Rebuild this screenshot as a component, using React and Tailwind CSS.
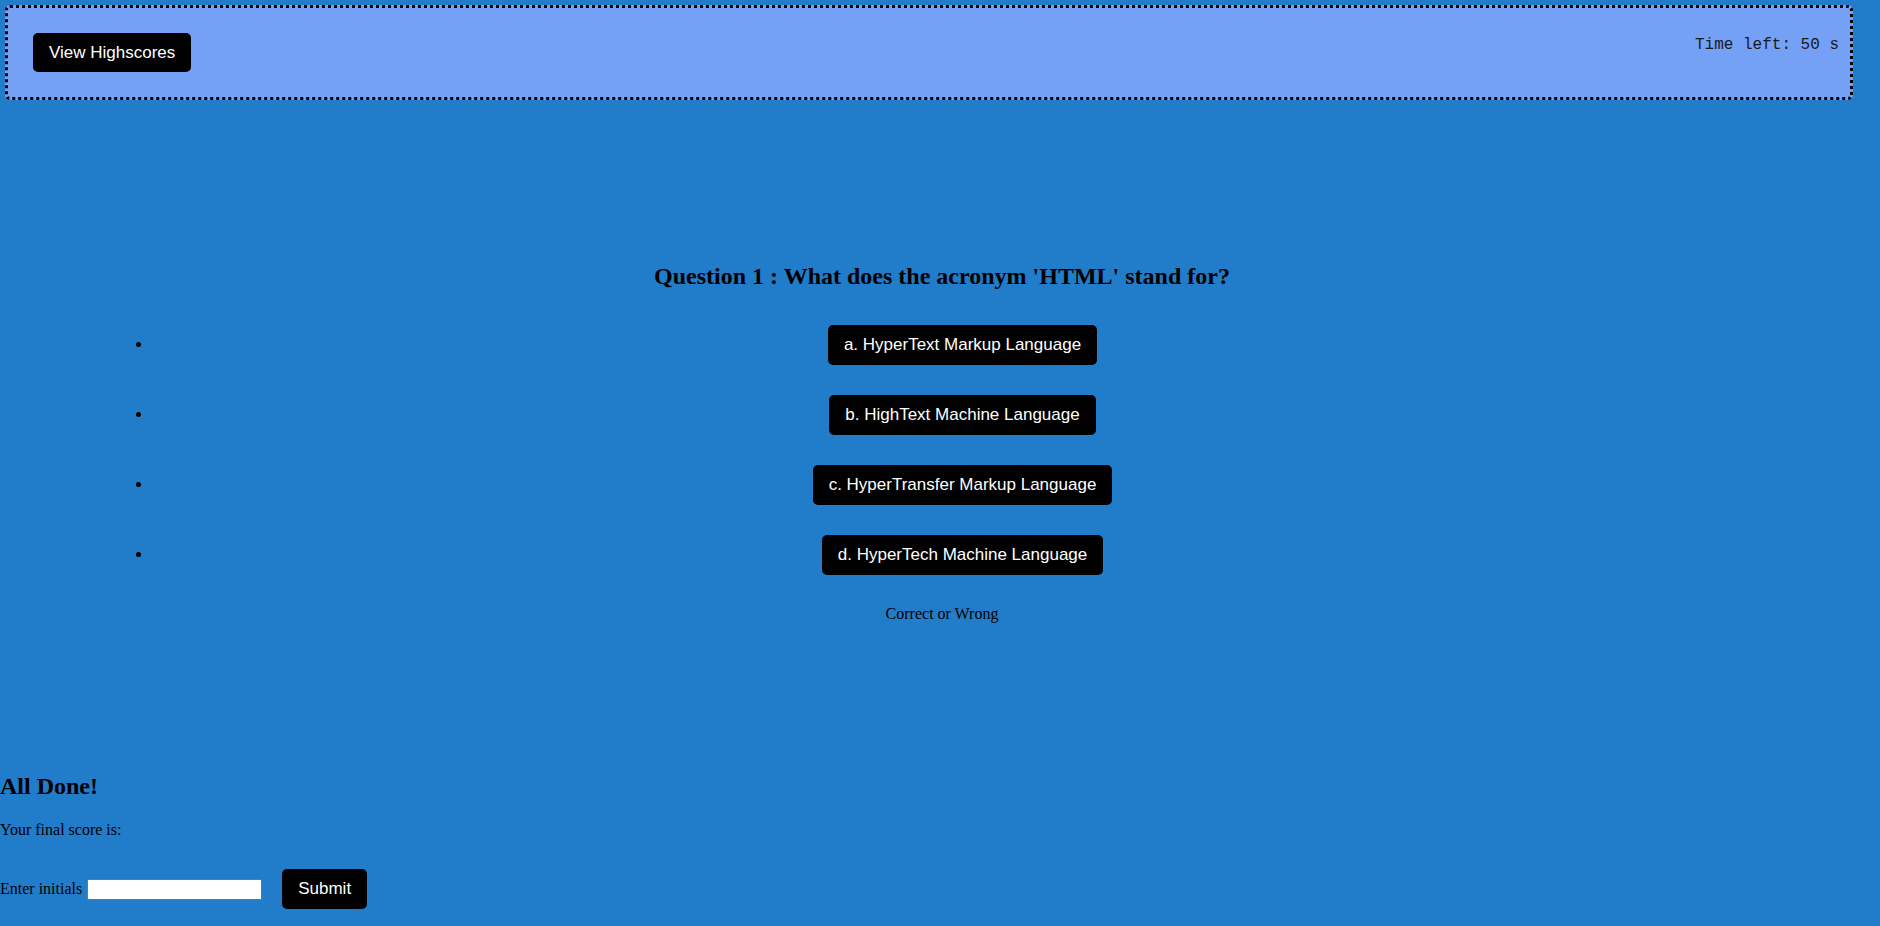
export default function App() {
  const answers = [
    "a. HyperText Markup Language",
    "b. HighText Machine Language",
    "c. HyperTransfer Markup Language",
    "d. HyperTech Machine Language",
  ];
  return (
    <div className="min-h-screen w-full bg-[#217cca] pt-[5px] text-black" style={{ fontFamily: '"Liberation Serif", serif' }}>
      <header className="ml-[5px] flex h-[95px] w-[1848px] items-start justify-between rounded-[5px] border-[3px] border-dotted border-black bg-[#74a0f5] pl-[25px] pr-[11px] pt-[25px]">
        <button
          className="h-[39px] rounded-[5px] bg-black px-4 text-[17px] text-white"
          style={{ fontFamily: '"Liberation Sans", Arial, sans-serif' }}
        >
          View Highscores
        </button>
        <span
          className="mt-[3px] text-[16px] leading-[18px] text-[#1a1a1a]"
          style={{ fontFamily: '"Liberation Mono", "Courier New", monospace' }}
        >
          Time left: 50 s
        </span>
      </header>

      <main className="pl-[4px]">
        <h2 className="mt-[162px] text-center text-[24px] font-bold leading-[28px]">
          Question 1 : What does the acronym 'HTML' stand for?
        </h2>
        <ul className="ml-[108px] mr-[107px] mt-[35px] list-disc pl-10 text-[16px]">
          {answers.map((a) => (
            <li key={a} className="mb-[30px] text-center">
              <button
                className="inline-block h-10 rounded-[5px] bg-black px-4 align-middle text-[17px] text-white"
                style={{ fontFamily: '"Liberation Sans", Arial, sans-serif' }}
              >
                {a}
              </button>
            </li>
          ))}
        </ul>
        <p className="mt-[1px] text-center text-[16px] leading-[18px]">Correct or Wrong</p>
      </main>

      <section className="mt-[149px]">
        <h2 className="text-[24px] font-bold leading-[28px]">All Done!</h2>
        <p className="mt-[21px] text-[16px] leading-[18px]">Your final score is:</p>
        <div className="mt-[30px] flex items-center pb-[17px]">
          <label className="text-[16px] leading-[18px]">Enter initials</label>
          <input
            type="text"
            className="ml-[5px] h-[21px] w-[175px] border border-[#767676] bg-white px-[2px] text-[13px]"
          />
          <button
            className="ml-[20px] h-10 rounded-[5px] bg-black px-4 text-[17px] text-white"
            style={{ fontFamily: '"Liberation Sans", Arial, sans-serif' }}
          >
            Submit
          </button>
        </div>
      </section>
    </div>
  );
}
